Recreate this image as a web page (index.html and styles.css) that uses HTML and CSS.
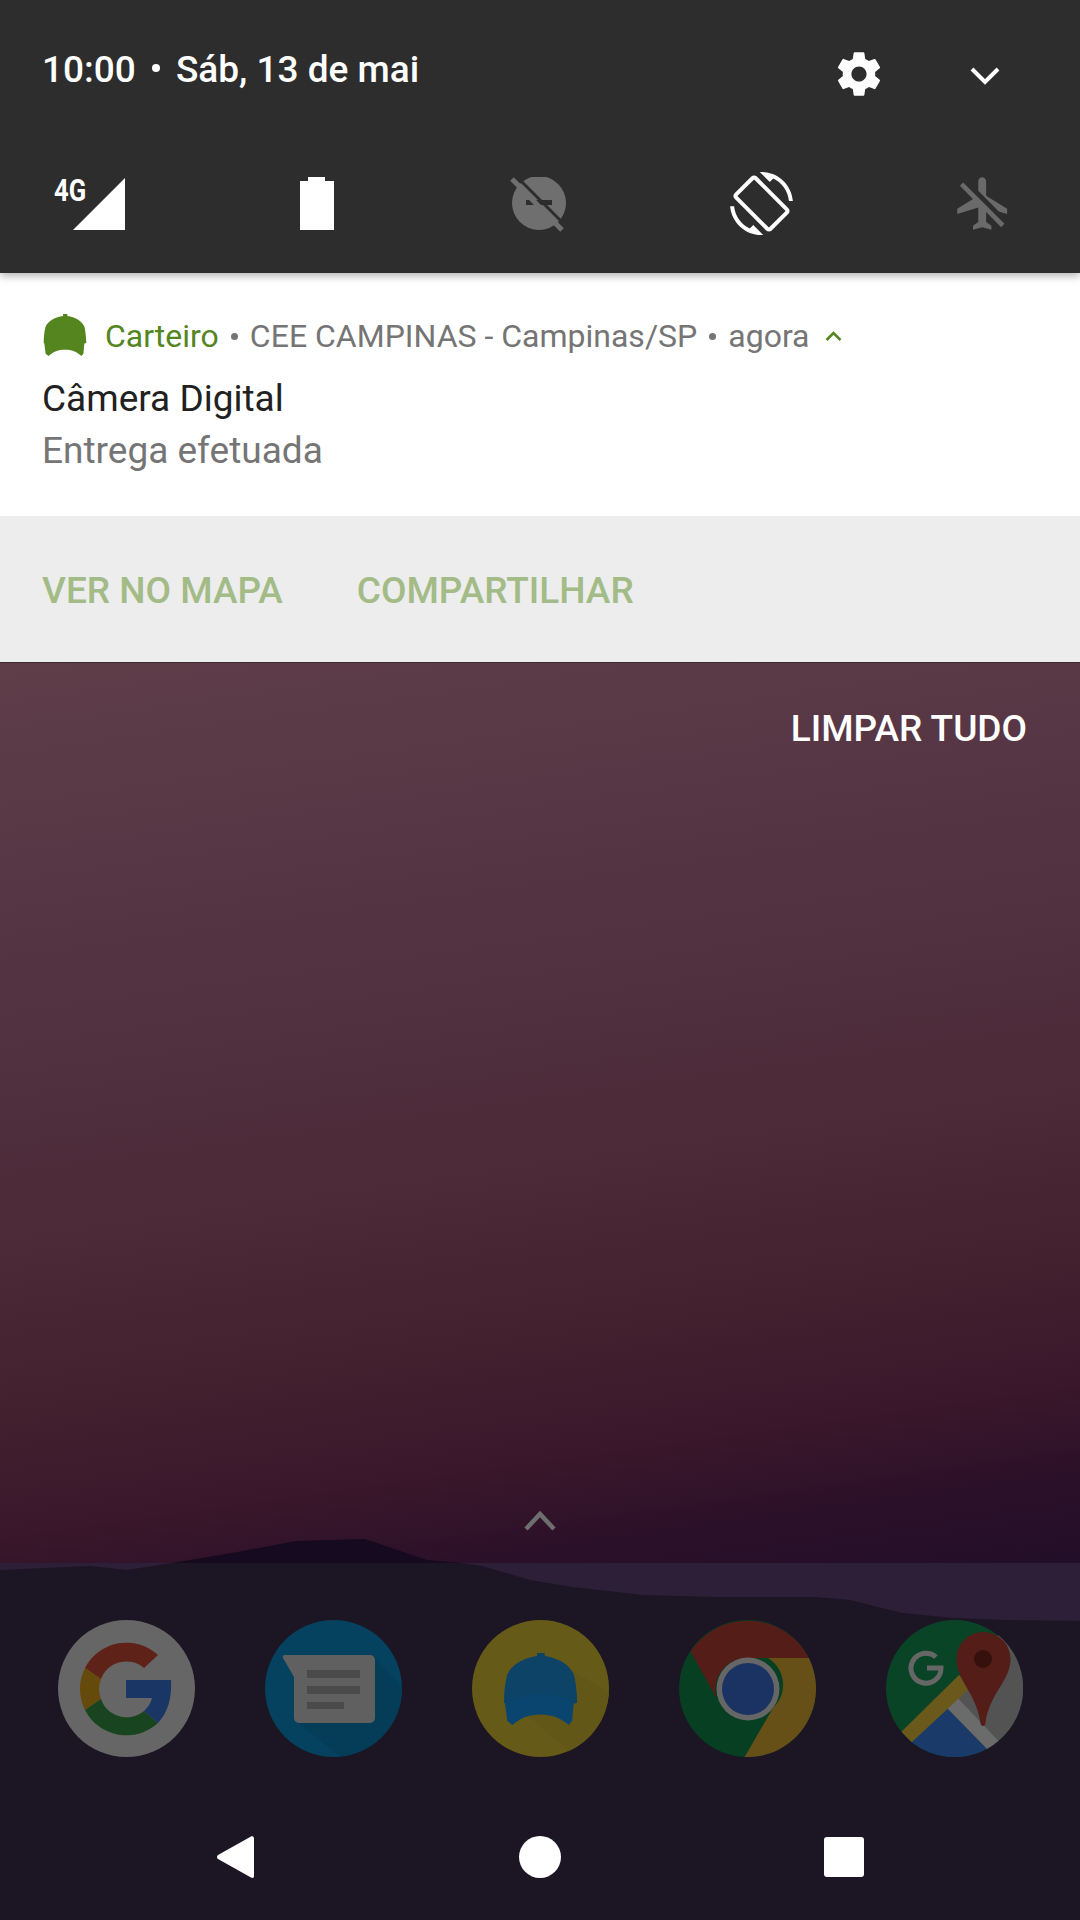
FILE: index.html
```html
<!DOCTYPE html>
<html lang="pt-BR">
<head>
    <meta charset="UTF-8">
    <meta name="viewport" content="width=device-width, initial-scale=1.0">
    <title>Notificações</title>
    <link rel="stylesheet" href="styles.css">
</head>
<body>
    <div class="screen">
        <div class="shade">
            <div class="shade-top">
                <div class="clock">
                    <span>10:00</span>
                    <span class="clock-dot"></span>
                    <span>Sáb, 13 de mai</span>
                </div>
                <svg class="icon-gear" viewBox="0 0 24 24"><path fill="#fff" d="M19.43 12.98c.04-.32.07-.64.07-.98s-.03-.66-.07-.98l2.11-1.65c.19-.15.24-.42.12-.64l-2-3.46c-.12-.22-.39-.3-.61-.22l-2.49 1c-.52-.4-1.08-.73-1.69-.98l-.38-2.65C14.46 2.18 14.25 2 14 2h-4c-.25 0-.46.18-.49.42l-.38 2.65c-.61.25-1.17.59-1.69.98l-2.49-1c-.23-.09-.49 0-.61.22l-2 3.46c-.13.22-.07.49.12.64l2.11 1.65c-.04.32-.07.65-.07.98s.03.66.07.98l-2.11 1.65c-.19.15-.24.42-.12.64l2 3.46c.12.22.39.3.61.22l2.49-1c.52.4 1.08.73 1.69.98l.38 2.65c.03.24.24.42.49.42h4c.25 0 .46-.18.49-.42l.38-2.65c.61-.25 1.17-.59 1.69-.98l2.49 1c.23.09.49 0 .61-.22l2-3.46c.12-.22.07-.49-.12-.64l-2.11-1.65zM12 15.5c-1.93 0-3.5-1.57-3.5-3.5s1.57-3.5 3.5-3.5 3.5 1.57 3.5 3.5-1.57 3.5-3.5 3.5z"/></svg>
                <svg class="icon-chevron" viewBox="0 0 30 20"><path fill="none" stroke="#fff" stroke-width="4" d="M2 3l13 13L28 3"/></svg>
            </div>
            <div class="tiles">
                <div class="tile tile-net">
                    <span class="net-label">4G</span>
                    <svg class="icon-signal" viewBox="0 0 52 52"><path fill="#fff" d="M52 0v52H0z"/></svg>
                </div>
                <div class="tile">
                    <svg class="icon-battery" viewBox="0 0 34 53"><path fill="#fff" d="M8 0h17v4h9v49H0V4h8z"/></svg>
                </div>
                <div class="tile">
                    <svg class="icon-dnd" viewBox="0 0 56 56">
                        <circle cx="29" cy="26" r="27" fill="#6f6f6f"/>
                        <path fill="#2d2d2d" d="M16 23h26v5H16z"/>
                        <path stroke="#2d2d2d" stroke-width="3" d="M6-1l50 50"/>
                        <path stroke="#6f6f6f" stroke-width="5" d="M2 2l50 51"/>
                    </svg>
                </div>
                <div class="tile">
                    <svg class="icon-tile" viewBox="0 0 24 24"><path fill="#fff" d="M16.48 2.52c3.27 1.55 5.61 4.72 5.97 8.48h1.5C23.44 4.84 18.29 0 12 0l-.66.03 3.81 3.81 1.33-1.32zm-6.25-.77c-.59-.59-1.54-.59-2.12 0L1.75 8.11c-.59.59-.59 1.54 0 2.12l12.02 12.02c.59.59 1.54.59 2.12 0l6.36-6.36c.59-.59.59-1.54 0-2.12L10.23 1.75zm4.6 19.44L2.81 9.17l6.36-6.36 12.02 12.02-6.36 6.36zm-7.31.29C4.25 19.94 1.91 16.76 1.55 13H.05C.56 19.16 5.71 24 12 24l.66-.03-3.81-3.81-1.33 1.32z"/></svg>
                </div>
                <div class="tile">
                    <svg class="icon-tile" viewBox="0 0 24 24"><path fill="#6a6a6a" d="M13 9V3.500c0-.83-.67-1.500-1.500-1.500S10 2.670 10 3.500v3.680l7.830 7.830L21 16v-2l-8-5zM3 5.270l4.990 4.990L2 14v2l8-2.500V19l-2 1.500V22l3.500-1 3.500 1v-1.500L13 19v-3.730L18.730 21 20 19.730 4.270 4 3 5.270z"/></svg>
                </div>
            </div>
        </div>

        <div class="notif">
            <div class="notif-head">
                <svg class="icon-cap" viewBox="0 0 220 217"><path fill="#55851f" d="M100 10V0h22v10c40 5 75 25 88 55 5 20 9 50 10 85l-10 2-5 53-10 12c-25-22-50-32-85-32s-60 10-85 32l-15-12-7-53-3-2c0-30 3-60 10-85C23 35 60 15 100 10z"/></svg>
                <span class="app-name">Carteiro</span>
                <span class="sep"></span>
                <span>CEE CAMPINAS - Campinas/SP</span>
                <span class="sep"></span>
                <span>agora</span>
                <svg class="icon-expand" viewBox="0 0 18 12"><path fill="none" stroke="#55851f" stroke-width="2.500" d="M2 10l7-7 7 7"/></svg>
            </div>
            <div class="notif-title">Câmera Digital</div>
            <div class="notif-text">Entrega efetuada</div>
        </div>
        <div class="notif-actions">
            <span>VER NO MAPA</span>
            <span>COMPARTILHAR</span>
        </div>

        <div class="wall">
            <div class="clear-row"><span>LIMPAR TUDO</span></div>
            <svg class="icon-up" viewBox="0 0 32 20"><path fill="none" stroke="#6e6e6e" stroke-width="4.500" d="M2 18L16 3l14 15"/></svg>
        </div>

        <div class="dock-area">
            <svg class="mountains" viewBox="0 0 1080 357"><path fill="#1c1524" d="M0 7l90-4 37 4 45-7h289l21 3 48 14 42 7 71 8 69 2h104l34 3 52 13 52 5 51 2 75 1v299H0z"/></svg>
            <svg class="mountains-far" viewBox="0 0 290 24"><path fill="#150a1f" d="M0 24l60-10L124 2l69-2 62 21 35 3z"/></svg>
            <div class="dock">
                <svg class="app" viewBox="0 0 137 137">
                    <circle cx="68.500" cy="68.500" r="68.500" fill="#666"/>
                    <path fill="#5e2218" d="M27 48A46.500 46.500 0 0 1 100 35L86 48A27 27 0 0 0 43 59z"/>
                    <path fill="#654a0c" d="M27 48A46.500 46.500 0 0 0 27 90L43 79A27 27 0 0 1 43 59z"/>
                    <path fill="#18451f" d="M27 90A46.500 46.500 0 0 0 100 103L86 91A27 27 0 0 1 43 79z"/>
                    <path fill="#1a3664" d="M68 60h45c1 18-3 32-13 43L86 91c4-4 7-8 8-13H68z"/>
                </svg>
                <svg class="app" viewBox="0 0 137 137">
                    <circle cx="68.500" cy="68.500" r="68.500" fill="#04425f"/>
                    <path fill="#053d58" d="M109 36l28 32a68.500 68.500 0 0 1-62 68.500L30 100z"/>
                    <path fill="#606060" d="M20 35h85a5 5 0 0 1 5 5v58a5 5 0 0 1-5 5H34a5 5 0 0 1-5-5V57L18 38a2 2 0 0 1 2-3z"/>
                    <path fill="#4a4a4a" d="M42 50h53v8H42zM42 66h53v8H42zM42 82h37v7H42z"/>
                </svg>
                <svg class="app" viewBox="0 0 137 137">
                    <circle cx="68.500" cy="68.500" r="68.500" fill="#655a17"/>
                    <path fill="#625716" d="M96 48l41 25a68.500 68.500 0 0 1-40 58L55 95z"/>
                    <g transform="translate(32 33) scale(0.332)">
                        <path fill="#0a4570" d="M100 10V0h22v10c40 5 75 25 88 55 5 20 9 50 10 85l-10 2-5 53-10 12c-25-22-50-32-85-32s-60 10-85 32l-15-12-7-53-3-2c0-30 3-60 10-85C23 35 60 15 100 10z"/>
                        <path fill="#0d4367" d="M100 10V0h22v10c40 5 75 25 88 55 5 20 9 50 10 85l-10 2c-30-20-60-30-100-30S40 132 10 152l-7-2c0-30 3-60 10-85C23 35 60 15 100 10z"/>
                    </g>
                </svg>
                <svg class="app" viewBox="0 0 137 137">
                    <circle cx="68.500" cy="68.500" r="68.500" fill="#063f22"/>
                    <path fill="#541d18" d="M11.500 31.700A68.500 68.500 0 0 1 129.800 38H69a31.500 31.500 0 0 0-31.500 40z"/>
                    <path fill="#675017" d="M129.800 38a68.500 68.500 0 0 1-64.200 99L94 88a31.500 31.500 0 0 0-5-50z"/>
                    <circle cx="69" cy="69" r="31.500" fill="#666"/>
                    <circle cx="69" cy="69" r="26" fill="#1a3363"/>
                </svg>
                <svg class="app" viewBox="0 0 137 137">
                    <circle cx="68.500" cy="68.500" r="68.500" fill="#0a4427"/>
                    <path fill="#535353" d="M112 15a68.500 68.500 0 0 1 .6 105.700L72 78l13-16z"/>
                    <path fill="#1a3a6a" d="M25.700 122.300L61 88l40 41a68.500 68.500 0 0 1-75.300-6.700z"/>
                    <path fill="#6b6b6b" d="M61 88l11-10 40.600 42.700A68.500 68.500 0 0 1 101 129z"/>
                    <path fill="#6a591b" d="M15.400 111.700L73 55l12 12-59.300 55.300z"/>
                    <path fill="#541d17" d="M97 12c15 0 27.500 12 27.500 27 0 22-21 34-25 64 0 4-5 4-5 0-4-30-24-42-24-64 0-15 12-27 26.500-27z"/>
                    <circle cx="97" cy="39" r="9" fill="#35100d"/>
                    <path fill="none" stroke="#666" stroke-width="5" d="M50 37A15 15 0 1 0 55 48H41"/>
                </svg>
            </div>
            <div class="navbar">
                <svg class="nav-back" viewBox="0 0 38 42"><path fill="#fff" d="M35 0a3 3 0 0 1 2 2v38c0 2-1.500 2.500-3 1.500L1 23a2.500 2.500 0 0 1 0-4L34 .500z"/></svg>
                <span class="nav-home"></span>
                <span class="nav-recent"></span>
            </div>
        </div>
    </div>
</body>
</html>
```

FILE: styles.css
```css
* {
    box-sizing: border-box;
}

html, body {
    margin: 0;
    padding: 0;
}

body {
    font-family: Roboto, "Liberation Sans", sans-serif;
    background-color: #1c1524;
}

svg {
    display: block;
    flex: none;
}

.screen {
    width: 1080px;
    height: 1920px;
    display: flex;
    flex-direction: column;
    overflow: hidden;
    position: relative;
}

/* quick settings */
.shade {
    height: 273px;
    flex: none;
    background-color: #2d2d2d;
    color: white;
    box-shadow: 0 3px 8px rgba(0, 0, 0, 0.3);
    position: relative;
    z-index: 1;
}

.shade-top {
    height: 140px;
    padding-left: 42px;
    display: flex;
    align-items: flex-start;
}

.clock {
    display: flex;
    align-items: center;
    gap: 12px;
    width: 792px;
    margin-top: 49px;
    font-size: 37px;
    font-weight: 500;
    line-height: 42px;
}

.clock-dot {
    width: 8px;
    height: 8px;
    margin: 0 4px 5px 4px;
    border-radius: 50%;
    background-color: white;
}

.icon-gear {
    width: 52px;
    height: 52px;
    margin: 48px 0 0 -1px;
}

.icon-chevron {
    width: 30px;
    height: 20px;
    margin: 66px 0 0 85px;
}

.tiles {
    display: flex;
    justify-content: center;
    height: 133px;
    margin-left: -2px;
}

.tile {
    flex: none;
    width: 222px;
    height: 133px;
    padding-top: 32px;
    display: flex;
    justify-content: center;
    align-items: flex-start;
    position: relative;
}

.net-label {
    position: absolute;
    left: 70px;
    top: 35px;
    font-family: "Liberation Sans Narrow", Roboto, sans-serif;
    font-size: 32px;
    font-weight: 700;
    line-height: 30px;
    transform: scaleX(0.8);
    transform-origin: left;
}

.icon-signal {
    width: 52px;
    height: 52px;
    position: absolute;
    left: 89px;
    top: 38px;
}

.icon-battery {
    width: 34px;
    height: 53px;
    margin-top: 5px;
}

.icon-dnd {
    width: 56px;
    height: 56px;
    margin: 5px 0 0 -3px;
}

.icon-tile {
    width: 63px;
    height: 63px;
}

/* notification card */
.notif {
    height: 243px;
    flex: none;
    background-color: white;
    padding: 0 43px;
    color: #757575;
}

.notif-head {
    display: flex;
    align-items: center;
    height: 44px;
    margin-top: 40px;
    padding-top: 2px;
    font-size: 32px;
}

.icon-cap {
    width: 44px;
    height: 42px;
    margin: -2px 18px 0 0;
}

.app-name {
    color: #55851f;
}

.sep {
    width: 7px;
    height: 7px;
    margin: 0 12px;
    border-radius: 50%;
    background-color: #757575;
}

.icon-expand {
    width: 19px;
    height: 12px;
    margin-left: 14px;
}

.notif-title {
    margin: 16px 0 0 -1px;
    font-size: 37px;
    line-height: 52px;
    color: #212121;
}

.notif-text {
    margin-left: -1px;
    font-size: 37px;
    line-height: 52px;
}

.notif-actions {
    height: 147px;
    flex: none;
    display: flex;
    align-items: center;
    gap: 74px;
    padding: 2px 0 0 42px;
    background-color: #ededed;
    color: #a3bb87;
    font-size: 37px;
    font-weight: 500;
    border-bottom: 1px solid #3d2b33;
}

/* wallpaper behind the shade */
.wall {
    height: 900px;
    flex: none;
    background: linear-gradient(172deg, #5f3e4a 0%, #533342 30%, #4c2a38 55%, #42202e 72%, #3a172b 83%, #2b1029 92%, #220e28 100%);
    position: relative;
}

.clear-row {
    display: flex;
    justify-content: flex-end;
    padding: 45px 53px 0 0;
    color: white;
    font-size: 37px;
    font-weight: 500;
    line-height: 42px;
}

.icon-up {
    width: 32px;
    height: 20px;
    position: absolute;
    left: 524px;
    top: 848px;
}

.dock-area {
    flex: 1;
    background-color: #2c1f37;
    position: relative;
    display: flex;
    flex-direction: column;
}

.mountains {
    position: absolute;
    left: 0;
    top: 0;
    width: 1080px;
    height: 357px;
}

.mountains-far {
    position: absolute;
    left: 172px;
    top: -24px;
    width: 290px;
    height: 24px;
}

.dock {
    position: relative;
    display: flex;
    gap: 70px;
    padding: 57px 0 0 57.500px;
}

.app {
    width: 137px;
    height: 137px;
}

.navbar {
    position: relative;
    display: flex;
    align-items: center;
    height: 42px;
    margin-top: 79px;
}

.nav-back {
    width: 38px;
    height: 42px;
    margin-left: 217px;
}

.nav-home {
    width: 42px;
    height: 42px;
    margin-left: 264px;
    border-radius: 50%;
    background-color: white;
}

.nav-recent {
    width: 40px;
    height: 40px;
    margin-left: 263px;
    border-radius: 3px;
    background-color: white;
}
```
